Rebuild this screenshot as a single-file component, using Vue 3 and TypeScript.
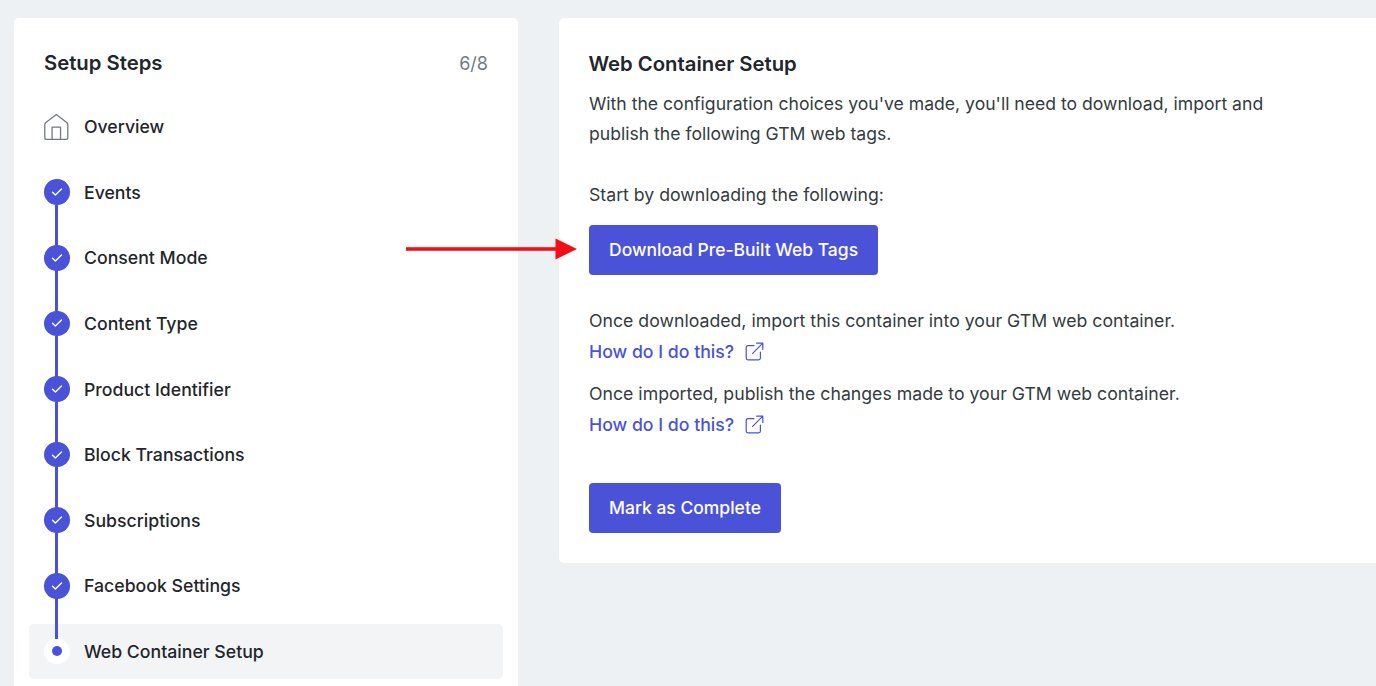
<script setup lang="ts">
const steps: string[] = [
  'Events',
  'Consent Mode',
  'Content Type',
  'Product Identifier',
  'Block Transactions',
  'Subscriptions',
  'Facebook Settings',
]
</script>

<template>
  <div class="page">
    <aside class="side">
      <header class="side-head">
        <h2 class="title side-title">Setup Steps</h2>
        <span class="count">6/8</span>
      </header>
      <ul class="steps">
        <li class="step">
          <svg class="home" width="26" height="28" viewBox="0 0 26 28" fill="none" stroke="#6f7a82" stroke-width="1.3" stroke-linejoin="round">
            <path d="M12.5 1.2 L23.4 9.8 Q24.2 10.4 24.2 11.4 V25 Q24.2 26.6 22.6 26.6 H2.4 Q0.8 26.6 0.8 25 V11.4 Q0.8 10.4 1.6 9.8 Z" />
            <path d="M8.2 26.6 V14.2 H16.8 V26.6" />
          </svg>
          <span class="label">Overview</span>
        </li>
        <li v-for="s in steps" :key="s" class="step">
          <span class="dot">
            <svg width="12" height="10" viewBox="0 0 12 10" fill="none" stroke="#fff" stroke-width="1.4" stroke-linecap="round" stroke-linejoin="round">
              <path d="M1.5 5.2 L4.4 8 L10.5 2" />
            </svg>
          </span>
          <span class="line"></span>
          <span class="label">{{ s }}</span>
        </li>
        <li class="step active">
          <span class="dot current"><span class="pip"></span></span>
          <span class="label">Web Container Setup</span>
        </li>
      </ul>
    </aside>

    <main class="panel">
      <h2 class="title panel-title">Web Container Setup</h2>
      <p class="intro">With the configuration choices you've made, you'll need to download, import and<br />publish the following GTM web tags.</p>
      <p class="start">Start by downloading the following:</p>
      <button class="btn" type="button">Download Pre-Built Web Tags</button>
      <p class="once">Once downloaded, import this container into your GTM web container.</p>
      <a class="link">How do I do this?
        <svg width="19" height="19" viewBox="0 0 19 19" fill="none" stroke="#4a52d8" stroke-width="1.2" stroke-linecap="round" stroke-linejoin="round">
          <path d="M9 3.6 H3 Q1.2 3.6 1.2 5.4 V16 Q1.2 17.8 3 17.8 H13.6 Q15.4 17.8 15.4 16 V10" />
          <path d="M7.6 11.4 L17.6 1.4 M11.6 1.2 H17.8 V7.4" />
        </svg>
      </a>
      <p class="once second">Once imported, publish the changes made to your GTM web container.</p>
      <a class="link">How do I do this?
        <svg width="19" height="19" viewBox="0 0 19 19" fill="none" stroke="#4a52d8" stroke-width="1.2" stroke-linecap="round" stroke-linejoin="round">
          <path d="M9 3.6 H3 Q1.2 3.6 1.2 5.4 V16 Q1.2 17.8 3 17.8 H13.6 Q15.4 17.8 15.4 16 V10" />
          <path d="M7.6 11.4 L17.6 1.4 M11.6 1.2 H17.8 V7.4" />
        </svg>
      </a>
      <button class="btn complete" type="button">Mark as Complete</button>
    </main>

    <svg class="arrow" width="174" height="24" viewBox="0 0 174 24">
      <rect x="0" y="10.2" width="152" height="3.6" fill="#f40f17" />
      <path d="M149.5 1.5 L171 12 L149.5 22.5 Z" fill="#f40f17" />
    </svg>
  </div>
</template>

<style>
html, body { margin: 0; background: #edf1f4; }
</style>

<style scoped>
.page {
  position: relative;
  display: flex;
  align-items: flex-start;
  gap: 41px;
  box-sizing: border-box;
  width: 1376px;
  height: 686px;
  padding: 18px 0 0 14px;
  overflow: hidden;
  font-family: Inter, "Liberation Sans", sans-serif;
  color: #1f262c;
}
.side {
  flex: 0 0 504px;
  box-sizing: border-box;
  height: 720px;
  padding: 30px 15px 0;
  background: #fff;
  border-radius: 5px;
}
.side-head {
  display: flex;
  justify-content: space-between;
  align-items: center;
  padding: 0 15px;
  height: 30px;
}
.title {
  margin: 0;
  font-size: 20.3px;
  line-height: 31px;
  font-weight: 600;
  color: #1f262c;
}
.side-title { line-height: 30px; }
.panel-title { margin-left: -0.6px; }
.count {
  font-size: 18px;
  color: #6f7b83;
}
.steps {
  list-style: none;
  margin: 21.2px 0 0;
  padding: 0;
  display: flex;
  flex-direction: column;
  gap: 10.6px;
}
.step {
  position: relative;
  display: flex;
  align-items: center;
  height: 55px;
  padding: 0 15px;
  border-radius: 5px;
}
.home { flex: 0 0 25.6px; }
.dot {
  flex: 0 0 25.6px;
  height: 25.6px;
  border-radius: 50%;
  background: #4a52d8;
  display: flex;
  align-items: center;
  justify-content: center;
  position: relative;
  z-index: 1;
}
.line {
  position: absolute;
  left: 26px;
  top: 40px;
  width: 3px;
  height: 52px;
  background: #4a52d8;
  z-index: 1;
}
.label {
  margin-left: 14.4px;
  font-size: 17.7px;
  font-weight: 500;
  color: #1f262c;
}
.active { background: #f2f4f6; }
.current { background: #fff; }
.pip {
  width: 10px;
  height: 10px;
  border-radius: 50%;
  background: #4a52d8;
}
.panel {
  flex: 0 0 900px;
  box-sizing: border-box;
  height: 545px;
  padding: 30px 30px 0;
  background: #fff;
  border-radius: 5px;
}
p { margin: 0; font-size: 17.7px; line-height: 30px; color: #343b41; }
.intro { margin-top: 10px; font-size: 17.6px; }
.start { margin-top: 31px; }
.btn {
  display: block;
  height: 50px;
  padding: 0 20px;
  border: 0;
  border-radius: 4px;
  background: #4a52d8;
  color: #fff;
  font: 450 17.5px/50px Inter, "Liberation Sans", sans-serif;
}
.panel .btn:first-of-type { margin-top: 15px; }
.once { margin-top: 31px; }
.second { margin-top: 13px; }
.link {
  display: flex;
  align-items: center;
  gap: 11px;
  height: 30px;
  font-size: 17.7px;
  font-weight: 500;
  color: #4a52d8;
}
.complete { margin-top: 44px; }
.arrow {
  position: absolute;
  left: 406px;
  top: 237px;
}
</style>
